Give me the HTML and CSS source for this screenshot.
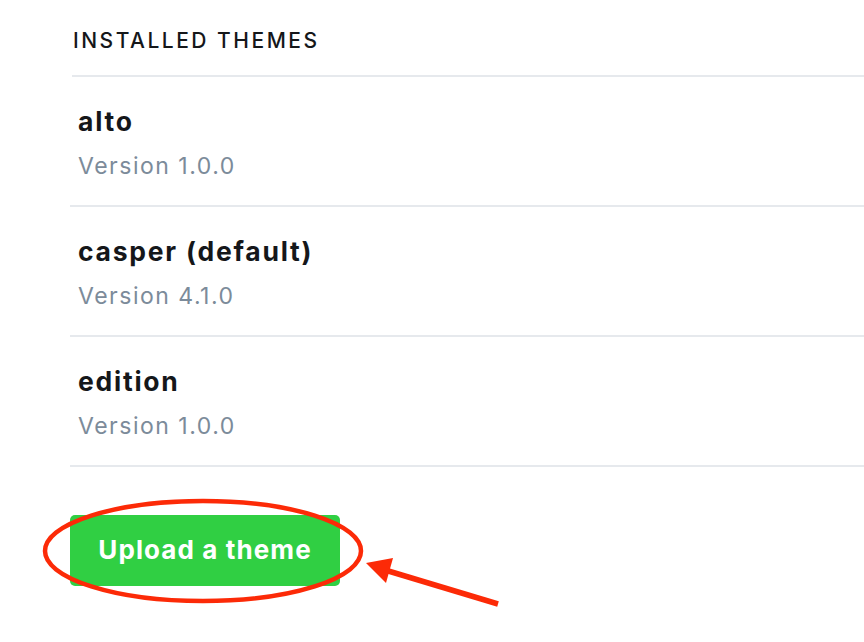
FILE: index.html
```html
<!DOCTYPE html>
<html>
<head>
<meta charset="utf-8">
<link rel="stylesheet" href="styles.css">
</head>
<body>
<div class="page">
  <h2 class="section-title">INSTALLED THEMES</h2>
  <ul class="theme-list">
    <li class="theme">
      <div class="theme-name">alto</div>
      <div class="theme-version">Version 1.0.0</div>
    </li>
    <li class="theme">
      <div class="theme-name">casper (default)</div>
      <div class="theme-version">Version 4.1.0</div>
    </li>
    <li class="theme">
      <div class="theme-name">edition</div>
      <div class="theme-version">Version 1.0.0</div>
    </li>
  </ul>
  <button class="upload-btn">Upload a theme</button>
</div>
<svg class="annotation" width="864" height="642" viewBox="0 0 864 642">
  <ellipse cx="203" cy="551" rx="158" ry="50" fill="none" stroke="#fc2a07" stroke-width="4.5"/>
  <line x1="498" y1="604" x2="385" y2="570" stroke="#fc2a07" stroke-width="5.5"/>
  <polygon points="366,563 393,558 386,583" fill="#fc2a07"/>
</svg>
</body>
</html>
```
FILE: styles.css
```css
html, body {
  margin: 0;
  padding: 0;
  background: #ffffff;
}
body {
  font-family: Inter, "Noto Sans", sans-serif;
  position: relative;
  width: 864px;
  height: 642px;
  overflow: hidden;
}
.page {
  padding: 29px 0 0 70px;
}
.section-title {
  margin: 0 0 0 2px;
  padding-left: 1px;
  font-size: 21px;
  line-height: 24px;
  font-weight: 500;
  letter-spacing: 2.5px;
  color: #15171a;
  padding-bottom: 22px;
  border-bottom: 2px solid #e6e9ed;
}
.theme-list {
  list-style: none;
  margin: 0;
  padding: 0;
}
.theme {
  padding: 28px 0 24px 8px;
  border-bottom: 2px solid #e6e9ed;
}
.theme-name {
  font-size: 26.5px;
  line-height: 32px;
  font-weight: 650;
  letter-spacing: 1.75px;
  color: #15171a;
}
.theme-version {
  margin-top: 14px;
  font-size: 23px;
  line-height: 30px;
  letter-spacing: 1.5px;
  color: #7c8b9a;
}
.upload-btn {
  display: flex;
  align-items: center;
  justify-content: center;
  margin-top: 48px;
  width: 270px;
  height: 71px;
  border: none;
  border-radius: 5px;
  background: #30cf43;
  color: #ffffff;
  font-family: Inter, "Noto Sans", sans-serif;
  font-size: 26px;
  font-weight: 650;
  letter-spacing: 1.1px;
  padding: 0 0 3px 0;
}
.annotation {
  position: absolute;
  left: 0;
  top: 0;
  pointer-events: none;
}
```
